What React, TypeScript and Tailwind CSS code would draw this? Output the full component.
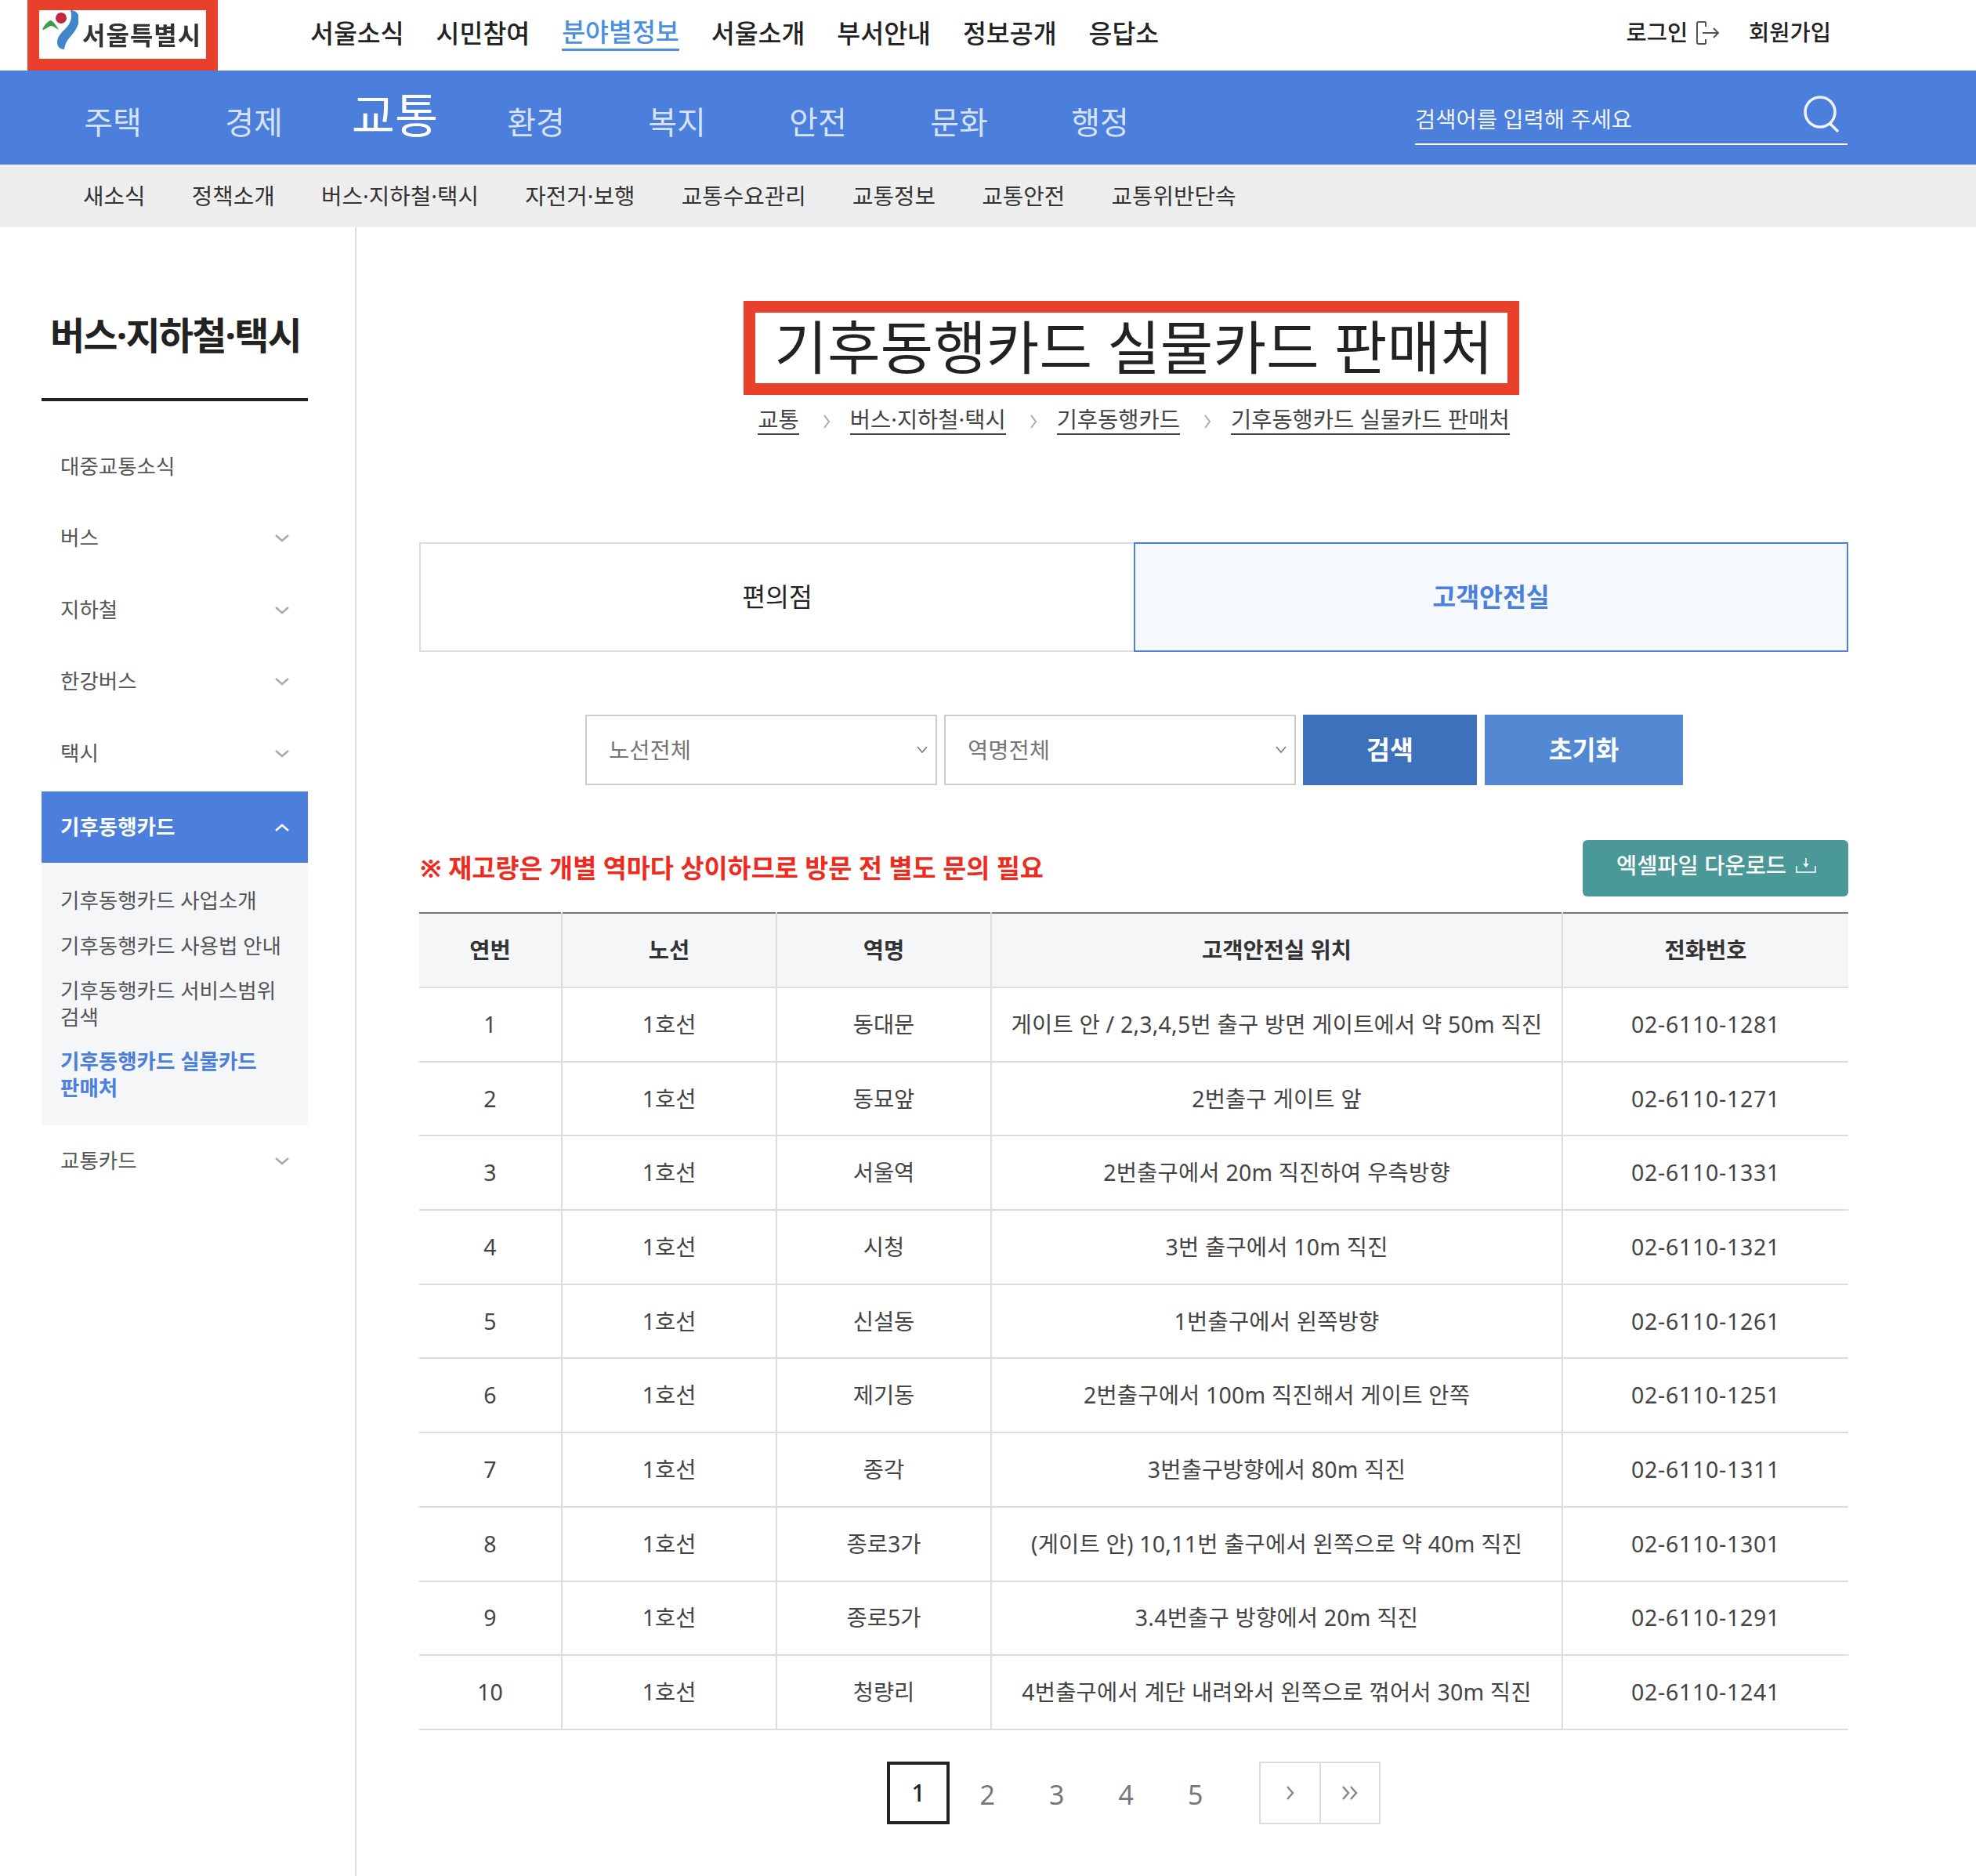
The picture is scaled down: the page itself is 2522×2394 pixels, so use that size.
const topNav = ["서울소식", "시민참여", "분야별정보", "서울소개", "부서안내", "정보공개", "응답소"];
const mainNav = ["주택", "경제", "교통", "환경", "복지", "안전", "문화", "행정"];
const subNav = ["새소식", "정책소개", "버스·지하철·택시", "자전거·보행", "교통수요관리", "교통정보", "교통안전", "교통위반단속"];

const rows = [
  ["1", "동대문", "게이트 안 / 2,3,4,5번 출구 방면 게이트에서 약 50m 직진", "02-6110-1281"],
  ["2", "동묘앞", "2번출구 게이트 앞", "02-6110-1271"],
  ["3", "서울역", "2번출구에서 20m 직진하여 우측방향", "02-6110-1331"],
  ["4", "시청", "3번 출구에서 10m 직진", "02-6110-1321"],
  ["5", "신설동", "1번출구에서 왼쪽방향", "02-6110-1261"],
  ["6", "제기동", "2번출구에서 100m 직진해서 게이트 안쪽", "02-6110-1251"],
  ["7", "종각", "3번출구방향에서 80m 직진", "02-6110-1311"],
  ["8", "종로3가", "(게이트 안) 10,11번 출구에서 왼쪽으로 약 40m 직진", "02-6110-1301"],
  ["9", "종로5가", "3.4번출구 방향에서 20m 직진", "02-6110-1291"],
  ["10", "청량리", "4번출구에서 계단 내려와서 왼쪽으로 꺾어서 30m 직진", "02-6110-1241"],
];

function Chevron({ up = false, color = "#aaa" }: { up?: boolean; color?: string }) {
  return (
    <svg width="18" height="10" viewBox="0 0 18 10" fill="none" stroke={color} strokeWidth="2.5">
      <path d={up ? "M1 9l8-7 8 7" : "M1 1l8 7 8-7"} />
    </svg>
  );
}

function SideItem({ label, arrow = true }: { label: string; arrow?: boolean }) {
  return (
    <li className="flex h-[91.5px] items-center justify-between pl-6 pr-6 text-[26.5px] text-[#555]">
      <span>{label}</span>
      {arrow && <Chevron />}
    </li>
  );
}

function SelectBox({ label }: { label: string }) {
  return (
    <div className="relative h-[90px] w-[449px]">
      <select className="h-full w-full appearance-none border-2 border-[#ccc] bg-white pl-[28px] text-[28.5px] text-[#777]">
        <option>{label}</option>
      </select>
      <svg className="absolute right-[12px] top-[40px]" width="14" height="10" viewBox="0 0 14 10" fill="none" stroke="#777" strokeWidth="1.5">
        <path d="M1 1l6 7 6-7" />
      </svg>
    </div>
  );
}

export default function App() {
  return (
    <div className="min-h-[2394px] bg-white text-[#222] [font-family:'Noto_Sans','Noto_Sans_CJK_KR',sans-serif]">
      <header className="flex h-[90px] items-center">
        <div className="ml-[35px] flex h-[90px] w-[243px] items-start border-x-[15px] border-b-[15px] border-t-[13px] border-[#e8402a] bg-white">
          <svg width="50" height="52" viewBox="50 13 50 52" className="shrink-0">
            <circle cx="78" cy="23" r="7" fill="#c0293f" />
            <path d="M54 38 C57 31 61 27 65 26 C69 28 72 33 75 38 C71 36 68 33 65 33 C61 34 58 38 54 38Z" fill="#3f9a4a" />
            <path d="M90 13 C96 13 101 17 101 24 C101 33 95 41 88 49 C84 54 83 58 82 63 C76 63 73 59 73 54 C73 47 78 42 84 36 C89 31 93 24 90 13Z" fill="#3f87c9" />
          </svg>
          <span className="ml-[5px] mt-[10px] text-[32px] font-bold leading-[44px] tracking-[1px] text-[#333] blur-[0.5px]">서울특별시</span>
        </div>
        <nav className="mb-[5px] ml-[118px] flex gap-[41px] text-[32.5px] font-medium leading-[44px]">
          {topNav.map((t) => (
            <a key={t} className={t === "분야별정보" ? "border-b-[3px] border-[#4a8fe0] leading-[40px] text-[#4a8fe0]" : ""}>
              {t}
            </a>
          ))}
        </nav>
        <div className="mb-[7px] ml-auto mr-[185px] flex items-center text-[28.5px] font-medium">
          <span>로그인</span>
          <svg className="ml-[10px]" width="30" height="30" viewBox="0 0 30 30" fill="none" stroke="#555" strokeWidth="2">
            <path d="M13 1H4a2 2 0 0 0-2 2v24a2 2 0 0 0 2 2h9M13 1v6M13 23v6M9 15h20M23 9l6 6-6 6" />
          </svg>
          <span className="ml-[38px]">회원가입</span>
        </div>
      </header>

      <div className="flex h-[120px] items-center bg-[#4b7fdb] pl-[54px] pr-[164px]">
        <nav className="flex">
          {mainNav.map((t) => (
            <a key={t} className={t === "교통" ? "w-[180px] pt-[2px] text-center text-[60px] leading-[80px] text-white" : "w-[180px] pt-[11px] text-center text-[40px] leading-[80px] text-[#d6e2f8]"}>
              {t}
            </a>
          ))}
        </nav>
        <div className="relative ml-auto mt-[6px] flex h-[64px] w-[552px] items-center border-b-2 border-white text-[28.5px] text-[#f0f4fc]">
          <span>검색어를 입력해 주세요</span>
          <svg className="absolute right-[9px] top-[1px]" width="48" height="48" viewBox="0 0 48 48" fill="none" stroke="#f0f4fc" strokeWidth="3.5">
            <circle cx="22" cy="21" r="19" />
            <path d="M34 35l11 11" />
          </svg>
        </div>
      </div>

      <nav className="flex h-[80px] items-center gap-[59.3px] bg-[#eee] pl-[106px] text-[28.8px] text-[#333]">
        {subNav.map((t) => (
          <a key={t}>{t}</a>
        ))}
      </nav>

      <div className="flex">
        <aside className="min-h-[2104px] w-[455px] shrink-0 border-r-2 border-[#ddd] pl-[53px]">
          <div className="w-[340px]">
            <h2 className="mt-[105px] h-[117px] whitespace-nowrap border-b-4 border-[#222] pl-[11px] text-[48px] font-bold leading-[66px] tracking-[-1.8px]">버스·지하철·택시</h2>
            <ul className="mt-[38px]">
              <SideItem label="대중교통소식" arrow={false} />
              <SideItem label="버스" />
              <SideItem label="지하철" />
              <SideItem label="한강버스" />
              <SideItem label="택시" />
              <li className="mt-[2.5px] flex h-[91px] items-center justify-between bg-[#4b7fdb] pl-6 pr-6 text-[26.5px] font-bold text-white">
                <span>기후동행카드</span>
                <Chevron up color="#fff" />
              </li>
              <li className="break-keep bg-[#f5f6f8] pb-[31px] pl-6 pr-[30px] pt-[31px] text-[26.5px] leading-[34px] text-[#555]">
                <p>기후동행카드 사업소개</p>
                <p className="mt-[24px]">기후동행카드 사용법 안내</p>
                <p className="mt-[23px]">기후동행카드 서비스범위 검색</p>
                <p className="mt-[22px] font-bold text-[#4b7fdb]">기후동행카드 실물카드 판매처</p>
              </li>
              <SideItem label="교통카드" />
            </ul>
          </div>
        </aside>

        <main className="ml-[80px] w-[1824px]">
          <div className="mt-[94px] flex flex-col items-center">
            <h1 className="ml-[-6px] h-[120px] w-[990px] whitespace-nowrap border-[15px] border-[#e8402a] pl-[6px] text-center text-[73.5px] leading-[88px]">기후동행카드 실물카드 판매처</h1>
            <div className="mt-[13px] flex items-center whitespace-nowrap text-[28.5px] text-[#444]">
              {["교통", "버스·지하철·택시", "기후동행카드", "기후동행카드 실물카드 판매처"].map((t, i) => (
                <span key={t} className="flex items-center">
                  {i > 0 && (
                    <svg className="ml-[30px] mr-[24px] mt-[4px]" width="11" height="20" viewBox="0 0 11 20" fill="none" stroke="#aaa" strokeWidth="2">
                      <path d="M2 2l6 8-6 8" />
                    </svg>
                  )}
                  <span className="border-b-2 border-[#444] leading-[36px]">{t}</span>
                </span>
              ))}
            </div>
          </div>

          <div className="mt-[137px] flex h-[140px] text-[32.5px]">
            <div className="flex w-[912px] items-center justify-center border-2 border-r-0 border-[#ddd]">편의점</div>
            <div className="flex flex-1 items-center justify-center border-2 border-[#4b7fdb] bg-[#f5f9fe] font-bold text-[#4b7fdb]">고객안전실</div>
          </div>

          <div className="ml-[212px] mt-[80px] flex">
            <SelectBox label="노선전체" />
            <div className="ml-[9px]">
              <SelectBox label="역명전체" />
            </div>
            <button className="ml-[9px] h-[90px] w-[222px] bg-[#3d71bc] text-[32.5px] font-bold text-white">검색</button>
            <button className="ml-[10px] h-[90px] w-[253px] bg-[#5289d2] text-[32.5px] font-bold text-white">초기화</button>
          </div>

          <div className="mt-[70px] flex h-[72px] items-center justify-between">
            <p className="pl-[1px] text-[32.7px] font-bold text-[#ee2b1f]">※ 재고량은 개별 역마다 상이하므로 방문 전 별도 문의 필요</p>
            <button className="flex h-[72px] w-[339px] items-center justify-center gap-[12px] rounded-[6px] bg-[#4a9898] pb-[8px] pl-[2px] text-[28.5px] font-medium text-white">
              엑셀파일 다운로드
              <svg width="26" height="20" viewBox="0 0 26 20" fill="none" stroke="#fff" strokeWidth="1.5">
                <path d="M1 11v8h24v-8M13 1v8" />
                <path d="M9 8h8l-4 5z" fill="#fff" stroke="none" />
              </svg>
            </button>
          </div>

          <table className="mt-[20px] w-full table-fixed border-collapse border-t-2 border-[#777] text-center text-[28.5px] text-[#444]">
            <colgroup>
              <col className="w-[182px]" />
              <col className="w-[274px]" />
              <col className="w-[274px]" />
              <col className="w-[729px]" />
              <col />
            </colgroup>
            <thead>
              <tr className="h-[95px] bg-[#f5f6f8] font-bold text-[#333]">
                <th className="border-b-2 border-r-2 border-[#ddd]">연번</th>
                <th className="border-b-2 border-r-2 border-[#ddd]">노선</th>
                <th className="border-b-2 border-r-2 border-[#ddd]">역명</th>
                <th className="border-b-2 border-r-2 border-[#ddd]">고객안전실 위치</th>
                <th className="border-b-2 border-[#ddd]">전화번호</th>
              </tr>
            </thead>
            <tbody>
              {rows.map((r) => (
                <tr key={r[0]} className="h-[94.7px]">
                  <td className="border-b-2 border-r-2 border-[#ddd]">{r[0]}</td>
                  <td className="border-b-2 border-r-2 border-[#ddd]">1호선</td>
                  <td className="border-b-2 border-r-2 border-[#ddd]">{r[1]}</td>
                  <td className="border-b-2 border-r-2 border-[#ddd] tracking-[0.2px]">{r[2]}</td>
                  <td className="border-b-2 border-[#ddd] tracking-[0.7px]">{r[3]}</td>
                </tr>
              ))}
            </tbody>
          </table>

          <div className="ml-[597px] mt-[40px] flex items-center text-[34px] text-[#777]">
            <span className="mr-[4px] flex h-[80px] w-[80px] items-center justify-center border-4 border-[#222] text-[30px] font-medium text-[#222]">1</span>
            <span className="w-[88.5px] pt-[6px] text-center">2</span>
            <span className="w-[88.5px] pt-[6px] text-center">3</span>
            <span className="w-[88.5px] pt-[6px] text-center">4</span>
            <span className="w-[88.5px] pt-[6px] text-center">5</span>
            <div className="ml-[37px] flex h-[80px] w-[155px] border-2 border-[#ddd]">
              <span className="flex w-[77px] items-center justify-center border-r-2 border-[#ddd]">
                <svg width="12" height="20" viewBox="0 0 12 20" fill="none" stroke="#888" strokeWidth="2.5"><path d="M2 2l7 8-7 8" /></svg>
              </span>
              <span className="flex flex-1 items-center justify-center">
                <svg width="22" height="20" viewBox="0 0 22 20" fill="none" stroke="#888" strokeWidth="2.5"><path d="M2 2l7 8-7 8M12 2l7 8-7 8" /></svg>
              </span>
            </div>
          </div>
        </main>
      </div>
    </div>
  );
}
